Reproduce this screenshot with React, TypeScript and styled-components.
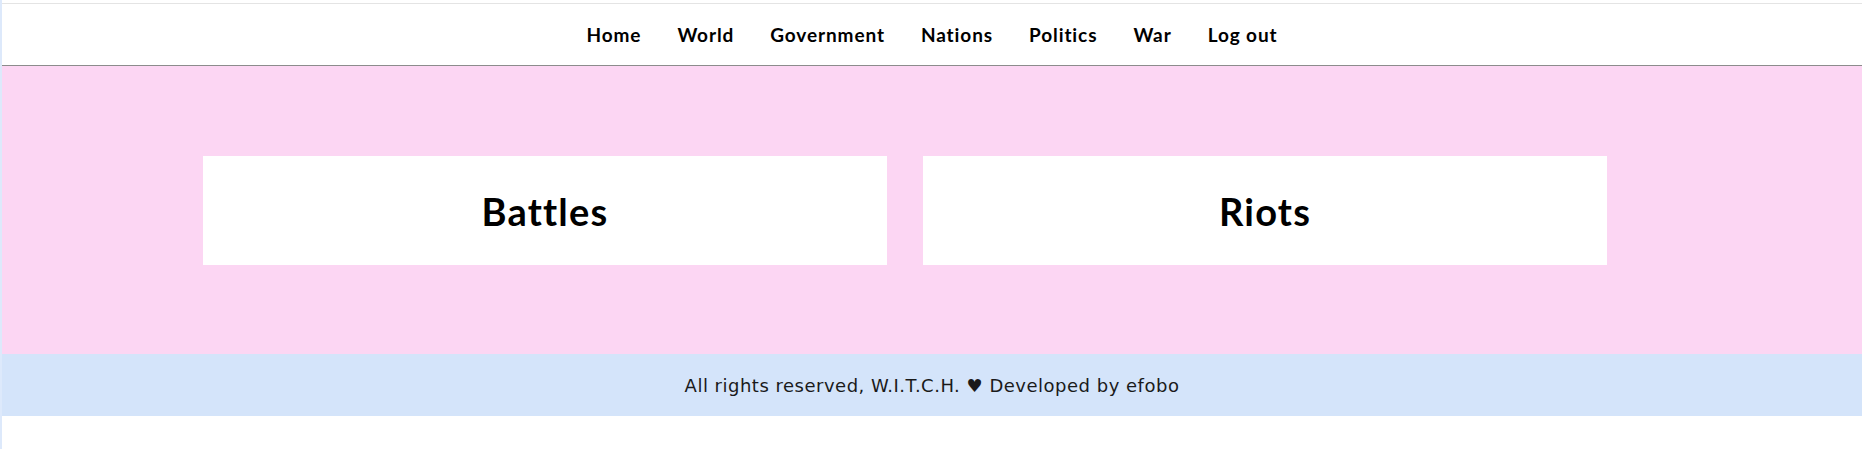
import React from "react";
import styled, { createGlobalStyle } from "styled-components";

const links = ["Home", "World", "Government", "Nations", "Politics", "War", "Log out"];
const sections = ["Battles", "Riots"];

const GlobalStyle = createGlobalStyle`
  html {
    background: #dde9fb;
  }
  body {
    margin: 0 0 0 2px;
    padding-top: 3px;
    min-height: 100vh;
    box-sizing: border-box;
    background: #ffffff;
    font-family: Lato, "Open Sans", sans-serif;
    color: #000;
  }
  * {
    box-sizing: border-box;
  }
`;

function App() {
  return (
    <>
      <GlobalStyle />
      <Header>
        <Nav>
          {links.map((item, index) => (
            <NavLink key={index} href="#">
              {item}
            </NavLink>
          ))}
        </Nav>
      </Header>
      <Main>
        <Cards>
          {sections.map((item, index) => (
            <Card key={index}>
              <h2>{item}</h2>
            </Card>
          ))}
        </Cards>
      </Main>
      <Footer>
        <p>All rights reserved, W.I.T.C.H. ♥ Developed by efobo</p>
      </Footer>
    </>
  );
}

const Header = styled.header`
  border-top: 1px solid #e4e4e4;
  border-bottom: 1px solid #8c8c8c;
  background: #ffffff;
`;

const Nav = styled.nav`
  height: 61px;
  display: flex;
  align-items: center;
  justify-content: center;
  gap: 36px;
`;

const NavLink = styled.a`
  font-size: 19px;
  font-weight: 700;
  letter-spacing: 0.9px;
  color: #000;
  text-decoration: none;
  line-height: 1;
`;

const Main = styled.main`
  background: #fcd6f3;
  padding: 90px 0 89px;
`;

const Cards = styled.div`
  display: grid;
  grid-template-columns: repeat(2, 684px);
  gap: 36px;
  margin-left: 201px;
`;

const Card = styled.div`
  height: 109px;
  background: #ffffff;
  display: flex;
  align-items: center;
  justify-content: center;

  h2 {
    margin: 0;
    font-size: 38px;
    font-weight: 700;
    letter-spacing: 1.2px;
    line-height: 1;
  }
`;

const Footer = styled.footer`
  height: 62px;
  background: #d4e4fa;
  display: flex;
  align-items: center;
  justify-content: center;

  p {
    margin: 0;
    font-family: "DejaVu Sans", sans-serif;
    font-size: 18px;
    letter-spacing: 0.5px;
    color: #1a1a1a;
  }
`;

export default App;
